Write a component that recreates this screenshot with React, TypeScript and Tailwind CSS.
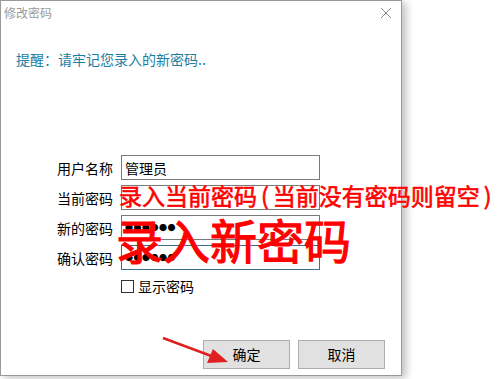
import React from 'react';

const font = { fontFamily: '"Noto Sans CJK SC", "Noto Sans", sans-serif' };

const rows = [
  { label: '用户名称', value: '管理员' },
  { label: '当前密码', value: '' },
  { label: '新的密码', value: 'dots' },
  { label: '确认密码', value: 'dots', focused: true },
];

function Field({ label, value, focused }: { label: string; value: string; focused?: boolean }) {
  return (
    <div className="flex items-center h-[25px]">
      <div className="w-[64px] text-[14px] leading-none text-black">{label}</div>
      <div
        className={
          'w-[199px] h-[25px] border flex items-center px-[3px] text-[14px] leading-none text-black ' +
          (focused ? 'border-[#3c6f90]' : 'border-[#7a7a7a]')
        }
      >
        {value === 'dots' ? (
          <span className="text-[8px] tracking-[0.5px] leading-none">●●●●●●</span>
        ) : (
          value
        )}
      </div>
    </div>
  );
}

export default function App() {
  return (
    <div className="relative w-[500px] h-[379px] bg-white overflow-hidden" style={font}>
      <div className="w-[402px] h-[376px] bg-white border border-[#9a9a9a] shadow-[4px_2px_8px_rgba(0,0,0,0.25)] flex flex-col">
        <div className="h-[24px] flex items-center justify-between pl-[3px] pr-[9px]">
          <span className="text-[12px] text-[#9a9a9a]">修改密码</span>
          <svg width="12" height="12" viewBox="0 0 12 12" className="text-[#8a8a8a]">
            <path d="M1 1 L11 11 M11 1 L1 11" stroke="currentColor" strokeWidth="1" />
          </svg>
        </div>
        <div className="pl-[15px] pt-[27px] text-[14px] leading-none text-[#1b7ea3]">提醒：请牢记您录入的新密码..</div>
        <div className="pl-[56px] pt-[89px] flex flex-col gap-[5px]">
          {rows.map(r => (
            <Field key={r.label} label={r.label} value={r.value} focused={r.focused} />
          ))}
          <div className="flex items-center pl-[64px] pt-[4px] gap-[4px]">
            <div className="w-[13px] h-[13px] border border-[#333]" />
            <span className="text-[14px] leading-none text-black">显示密码</span>
          </div>
        </div>
        <div className="flex-1" />
        <div className="flex justify-end gap-[8px] pr-[16px] pb-[6px]">
          <button className="w-[87px] h-[29px] bg-[#e1e1e1] border border-[#adadad] text-[14px] text-black">确定</button>
          <button className="w-[87px] h-[29px] bg-[#e1e1e1] border border-[#adadad] text-[14px] text-black">取消</button>
        </div>
      </div>

      <div className="absolute left-[119px] top-[184px] text-[23px] leading-none text-[#ff0000] whitespace-nowrap [-webkit-text-stroke:0.6px_#ff0000]">
        录入当前密码<span className="px-[4px]">(</span>当前没有密码则留空<span className="px-[4px]">)</span>
      </div>
      <div className="absolute left-[116px] top-[215px] text-[47px] leading-none text-[#ff0000] whitespace-nowrap [-webkit-text-stroke:1.2px_#ff0000]">
        录入新密码
      </div>
      <svg className="absolute left-0 top-0" width="500" height="379">
        <line x1="163" y1="338" x2="214" y2="357" stroke="#e02020" strokeWidth="2.5" />
        <polygon points="228,362 207,363 213,349" fill="#e02020" />
      </svg>
    </div>
  );
}
